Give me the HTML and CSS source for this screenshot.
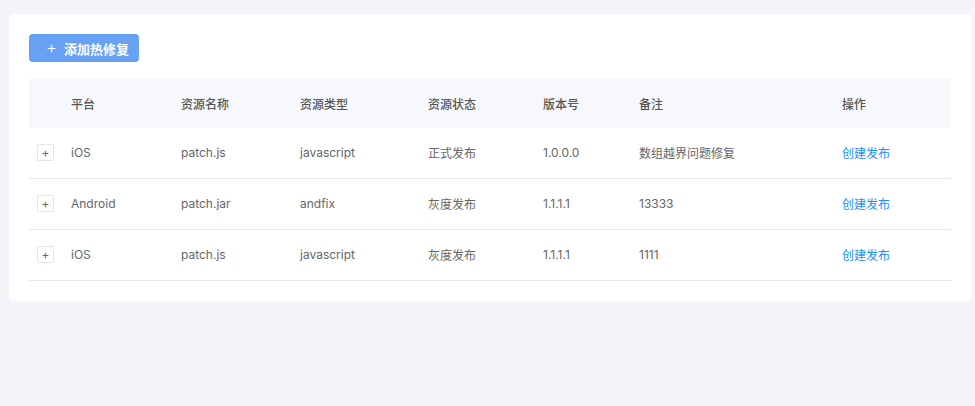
FILE: index.html
```html
<!DOCTYPE html>
<html lang="zh">
<head>
<meta charset="utf-8">
<link rel="stylesheet" href="styles.css">
</head>
<body>
<div class="page">
  <div class="card">
    <button class="btn-add"><span class="btn-plus">+</span><span>添加热修复</span></button>
    <table class="tbl">
      <colgroup>
        <col class="c-exp"><col class="c-plat"><col class="c-name"><col class="c-type"><col class="c-state"><col class="c-ver"><col class="c-note"><col class="c-op">
      </colgroup>
      <thead>
        <tr><th></th><th>平台</th><th>资源名称</th><th>资源类型</th><th>资源状态</th><th>版本号</th><th>备注</th><th>操作</th></tr>
      </thead>
      <tbody>
        <tr><td><span class="exp">+</span></td><td>iOS</td><td>patch.js</td><td>javascript</td><td>正式发布</td><td>1.0.0.0</td><td>数组越界问题修复</td><td><a class="link">创建发布</a></td></tr>
        <tr><td><span class="exp">+</span></td><td>Android</td><td>patch.jar</td><td>andfix</td><td>灰度发布</td><td>1.1.1.1</td><td>13333</td><td><a class="link">创建发布</a></td></tr>
        <tr><td><span class="exp">+</span></td><td>iOS</td><td>patch.js</td><td>javascript</td><td>灰度发布</td><td>1.1.1.1</td><td>1111</td><td><a class="link">创建发布</a></td></tr>
      </tbody>
    </table>
  </div>
</div>
</body>
</html>
```
FILE: styles.css
```css
html, body {
  margin: 0;
  padding: 0;
  background: #f4f5f9;
  font-family: "Inter", "Noto Sans CJK SC", sans-serif;
  font-size: 12px;
  color: #666;
}
.page {
  padding: 14px 4px 0 9px;
  height: 406px;
  box-sizing: border-box;
}
.card {
  background: #fff;
  border-radius: 4px;
  padding: 20px;
}
.btn-add {
  display: flex;
  align-items: center;
  height: 28px;
  width: 110px;
  padding: 0 0 0 17px;
  border: none;
  border-radius: 4px;
  background: #66a1f3;
  color: #fff;
  font-family: "Inter", "Noto Sans CJK SC", sans-serif;
  font-size: 13px;
  font-weight: 700;
  box-sizing: border-box;
}
.btn-plus {
  font-weight: 300;
  font-size: 17px;
  margin-right: 7px;
  line-height: 1;
  position: relative;
  top: -1px;
}
.tbl {
  margin-top: 16px;
  width: 100%;
  border-collapse: separate;
  border-spacing: 0;
  table-layout: fixed;
}
.c-exp { width: 34px; }
.c-plat { width: 110px; }
.c-name { width: 119px; }
.c-type { width: 128px; }
.c-state { width: 115px; }
.c-ver { width: 96px; }
.c-note { width: 203px; }
.c-op { width: auto; }
.tbl th {
  background: #f7f8fb;
  height: 50px;
  padding: 0 8px;
  text-align: left;
  font-weight: 500;
  color: #555;
}
.tbl th:first-child { border-top-left-radius: 4px; }
.tbl th:last-child { border-top-right-radius: 4px; }
.tbl td {
  height: 49px;
  padding: 0 8px 1px;
  border-bottom: 1px solid #e8e8e8;
  color: #666;
  white-space: nowrap;
}
.exp {
  display: flex;
  align-items: center;
  justify-content: center;
  width: 15px;
  height: 15px;
  border: 1px solid #e5e5e5;
  border-radius: 1px;
  color: #666;
  font-size: 12px;
  line-height: 1;
}
.link {
  color: #1890ff;
  cursor: pointer;
}
```
